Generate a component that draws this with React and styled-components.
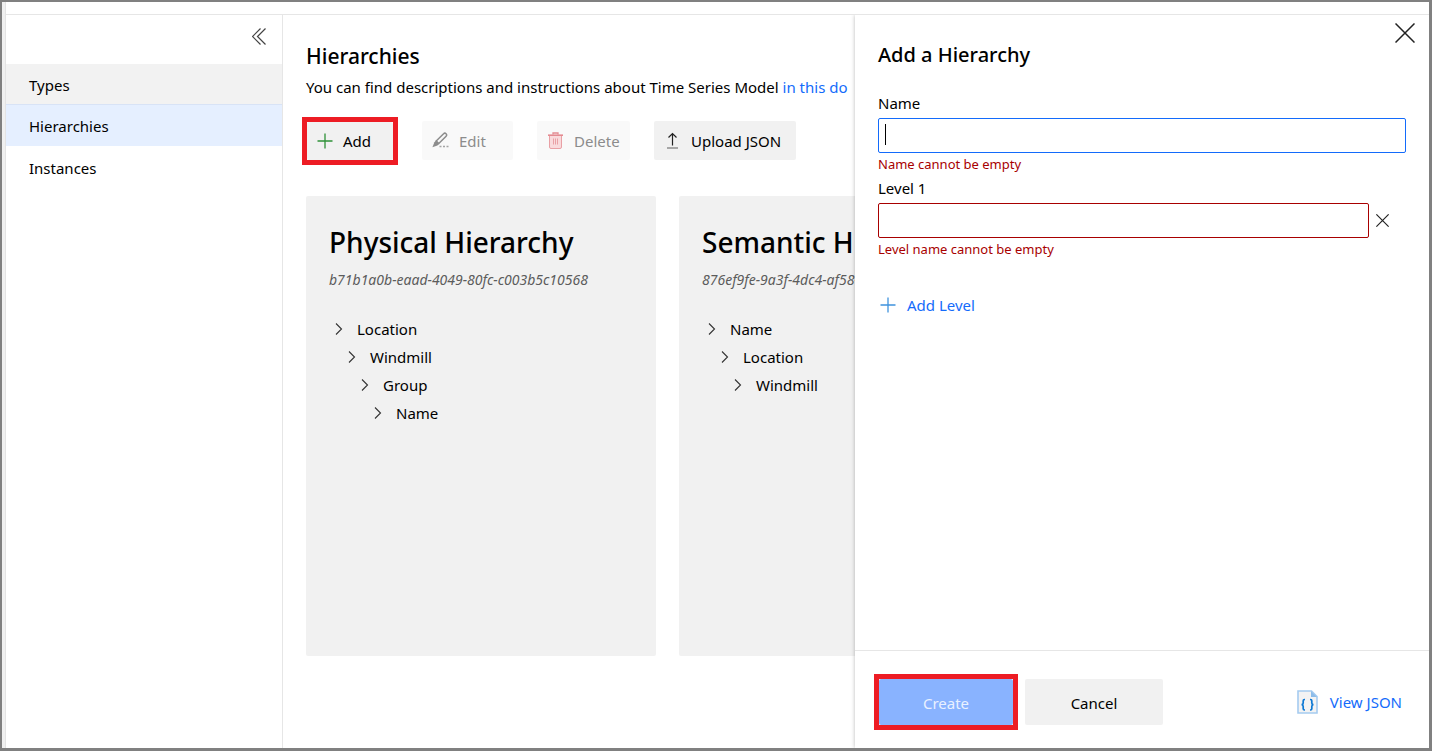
import React from "react";
import styled, { createGlobalStyle } from "styled-components";

const GlobalStyle = createGlobalStyle`
  *, *::before, *::after { box-sizing: border-box; }
  body {
    margin: 0;
    background: #fff;
    color: #000;
    font-family: "Noto Sans", "Open Sans", sans-serif;
    font-size: 15px;
    line-height: 20px;
  }
  h1, h2, h3, p, ul { margin: 0; padding: 0; }
  ul { list-style: none; }
  button, input { font: inherit; color: inherit; }
  a { color: #136bfb; text-decoration: none; }
`;

const Frame = styled.div`
  display: flex;
  flex-direction: column;
  min-height: 100vh;
  border: solid #808080;
  border-width: 2px 3px 3px 2px;
  overflow: hidden;
`;

const Shell = styled.div`
  display: flex;
  flex: 1;
  border-left: 3px solid #f0f0f0;
`;

const Page = styled.div`
  display: flex;
  flex-direction: column;
  flex: 1;
  min-width: 0;
  border-left: 1px solid #e3e3e3;
`;

const TopStrip = styled.div`
  height: 13px;
  border-bottom: 1px solid #e6e6e6;
`;

const Body = styled.div`
  display: flex;
  flex: 1;
`;

const Sidebar = styled.nav`
  flex: 0 0 277px;
  border-right: 1px solid #e6e6e6;
`;

const SidebarTop = styled.div`
  display: flex;
  justify-content: flex-end;
  height: 49px;
  padding: 12px 14px 0 0;
`;

const IconButton = styled.button`
  display: flex;
  flex: none;
  align-items: center;
  justify-content: center;
  width: ${(p) => p.$size}px;
  height: ${(p) => p.$size}px;
  padding: 0;
  border: 0;
  background: none;
  cursor: pointer;
`;

const NavLink = styled.a`
  display: flex;
  align-items: center;
  height: ${(p) => (p.$hover ? 40 : 42)}px;
  padding: ${(p) => (p.$active ? 0 : 2)}px 0 0 23px;
  border-top: ${(p) => (p.$active ? "1px solid #d8e3f6" : "0")};
  background: ${(p) => (p.$active ? "#e5efff" : p.$hover ? "#f2f2f2" : "none")};
  color: #000;
`;

const Main = styled.main`
  flex: 1;
  min-width: 0;
  padding: 29px 0 0 23px;
  overflow: hidden;
`;

const PageTitle = styled.h1`
  font-size: 21px;
  font-weight: 500;
  line-height: 24px;
`;

const Intro = styled.p`
  margin-top: 9px;
  white-space: nowrap;
`;

const Toolbar = styled.div`
  display: flex;
  align-items: center;
  gap: 24px;
  margin-top: 24px;
`;

const Highlight = styled.span`
  display: flex;
  flex: none;
  width: ${(p) => p.$width}px;
  margin: -4px 0 -5px -4px;
  border: 5px solid #ed1c24;
`;

const Button = styled.button`
  display: flex;
  flex: none;
  align-items: center;
  gap: 10px;
  width: ${(p) => p.$width}px;
  height: ${(p) => p.$height || 39}px;
  justify-content: ${(p) => (p.$center ? "center" : "flex-start")};
  padding: ${(p) => (p.$center ? "2px 0 0" : "0 0 0 10px")};
  border: 0;
  border-radius: 2px;
  background: ${(p) => (p.$primary ? "#89b3ff" : "#f1f1f1")};
  color: ${(p) => (p.$primary ? "#fff" : "#000")};
  cursor: pointer;

  &:disabled {
    background: ${(p) => (p.$primary ? "#89b3ff" : "#f9f9f9")};
    color: ${(p) => (p.$primary ? "#e9f1ff" : "#8c8c8c")};
    cursor: default;
  }
`;

const Cards = styled.div`
  display: flex;
  gap: 23px;
  margin-top: 36px;
`;

const Card = styled.article`
  flex: none;
  width: 350px;
  min-height: 460px;
  padding: 27px 23px;
  border-radius: 2px;
  background: #f1f1f1;
`;

const CardTitle = styled.h2`
  font-size: 28px;
  font-weight: 500;
  line-height: 38px;
  white-space: nowrap;
`;

const CardId = styled.p`
  margin-top: 9px;
  color: #5c5c5c;
  font-size: 14px;
  font-style: italic;
  white-space: nowrap;
`;

const Tree = styled.ul`
  margin-top: 25px;
`;

const TreeNode = styled.li`
  display: flex;
  align-items: center;
  gap: 13px;
  height: 28px;
  padding-left: ${(p) => 5 + p.$depth * 13}px;
`;

const Drawer = styled.aside`
  position: relative;
  display: flex;
  flex: 0 0 574px;
  flex-direction: column;
  background: #fff;
  box-shadow: 0 0 4px rgba(0, 0, 0, 0.28);
  clip-path: inset(0 0 0 -8px);
`;

const DrawerHeader = styled.header`
  display: flex;
  justify-content: space-between;
  padding: 6px 12px 0 23px;
`;

const DrawerTitle = styled.h2`
  padding-top: 22px;
  font-size: 20px;
  font-weight: 500;
  line-height: 24px;
`;

const DrawerBody = styled.div`
  flex: 1;
  padding: 26px 23px 0;
`;

const Field = styled.div`
  margin-bottom: 4px;
`;

const Label = styled.label`
  display: block;
  margin-bottom: 5px;
`;

const InputRow = styled.div`
  position: relative;
  display: flex;
  align-items: center;
  gap: 3px;
  padding-right: ${(p) => (p.$removable ? 14 : 0)}px;
`;

const Input = styled.input`
  flex: 1;
  min-width: 0;
  height: 35px;
  padding: 0 6px;
  border: 1px solid ${(p) => (p.$invalid ? "#a80000" : "#136bfb")};
  border-radius: 2px;
  outline: 0;
  background: #fff;
  caret-color: transparent;
`;

const Caret = styled.span`
  position: absolute;
  top: 6px;
  left: 7px;
  width: 1px;
  height: 21px;
  background: #000;
`;

const ErrorText = styled.p`
  padding-top: 1px;
  color: #a80000;
  font-size: 13px;
`;

const TextButton = styled.button`
  display: flex;
  align-items: center;
  gap: 11px;
  margin-top: 36px;
  padding: 0 0 0 2px;
  border: 0;
  background: none;
  color: #136bfb;
  cursor: pointer;
`;

const DrawerFooter = styled.footer`
  display: flex;
  align-items: center;
  gap: 7px;
  height: 98px;
  padding: 4px 27px 0 23px;
  border-top: 1px solid #e6e6e6;
`;

const JsonLink = styled.a`
  display: flex;
  align-items: center;
  gap: 12px;
  margin-left: auto;
`;

const Plus = ({ color }) => (
  <svg width="16" height="16" viewBox="0 0 16 16" fill="none" stroke={color} aria-hidden="true">
    <path d="M8 .5v15M.5 8h15" strokeWidth="1.3" />
  </svg>
);

const Cross = ({ size }) => (
  <svg width={size} height={size} viewBox="0 0 20 20" fill="none" stroke="#222" aria-hidden="true">
    <path d="M.5.5l19 19M19.5.5l-19 19" strokeWidth={size > 16 ? 1.5 : 1.8} />
  </svg>
);

const Collapse = () => (
  <svg width="14" height="17" viewBox="0 0 14 17" fill="none" stroke="#444" strokeWidth="1.2" aria-hidden="true">
    <path d="M8.5.5l-8 8 8 8M13.5.5l-8 8 8 8" />
  </svg>
);

const Chevron = () => (
  <svg width="10" height="12" viewBox="0 0 10 12" fill="none" stroke="#333" strokeWidth="1.1" aria-hidden="true">
    <path d="M2 .5L7.500 6 2 11.500" />
  </svg>
);

const Pencil = () => (
  <svg width="17" height="17" viewBox="0 0 17 17" fill="none" aria-hidden="true">
    <path d="M4.200 9L11.600 1.800a1.500 1.500 0 0 1 2.500 2.400L6.800 11.500z" stroke="#8d8d8d" strokeWidth="1.500" />
    <path d="M4 8.500l3.400 3.300-2 1.600-5 1.900 2-5z" fill="#8d8d8d" />
    <path d="M7.500 14.500h2M11 14.500h2M14.500 14.500h2" stroke="#a5a5a5" strokeWidth="1.600" />
  </svg>
);

const Bin = () => (
  <svg width="17" height="17" viewBox="0 0 17 17" fill="none" stroke="#e9a0a5" aria-hidden="true">
    <path d="M2.500 3.500h12v11.500a1.500 1.500 0 0 1-1.500 1.500H4A1.500 1.500 0 0 1 2.500 15z" fill="#f9dadc" />
    <path d="M1 3.200h15" stroke="#e48b91" strokeWidth="1.600" />
    <path d="M6 2.500V1h5v1.500" stroke="#e48b91" strokeWidth="1.300" />
    <path d="M6.500 6.500v6M8.500 6.500v6M10.500 6.500v6" />
  </svg>
);

const UploadArrow = () => (
  <svg width="17" height="17" viewBox="0 0 17 17" fill="none" aria-hidden="true">
    <path d="M8.500 13.500V1.500M4.500 5.500l4-4 4 4" stroke="#222" strokeWidth="1.200" />
    <path d="M3 16h11" stroke="#777" strokeWidth="1.200" />
  </svg>
);

const JsonFile = () => (
  <svg width="21" height="24" viewBox="0 0 21 24" fill="none" aria-hidden="true">
    <path d="M1 1h13.500L20 6.500V23H1z" fill="#f3f3f3" stroke="#a5cbf0" strokeWidth="1.600" />
    <path d="M14 1v6h6z" fill="#8dbdea" />
    <path
      d="M8 9.500H7.500q-1.300 0-1.300 1.300v2.200q0 1.500-1.600 1.700 1.600.2 1.600 1.700v2.300q0 1.300 1.300 1.300H8M13 9.500h.5q1.300 0 1.300 1.300v2.200q0 1.500 1.600 1.700-1.600.2-1.600 1.700v2.300q0 1.300-1.300 1.300H13"
      stroke="#0c78d4"
      strokeWidth="1.700"
    />
  </svg>
);

const hierarchies = [
  {
    name: "Physical Hierarchy",
    id: "b71b1a0b-eaad-4049-80fc-c003b5c10568",
    levels: ["Location", "Windmill", "Group", "Name"],
  },
  {
    name: "Semantic H",
    id: "876ef9fe-9a3f-4dc4-af58-",
    levels: ["Name", "Location", "Windmill"],
  },
];

export default function App() {
  return (
    <Frame>
      <GlobalStyle />
      <Shell>
        <Page>
          <TopStrip />
          <Body>
            <Sidebar>
              <SidebarTop>
                <IconButton $size={18} aria-label="Collapse menu">
                  <Collapse />
                </IconButton>
              </SidebarTop>
              <NavLink href="#types" $hover>Types</NavLink>
              <NavLink href="#hierarchies" $active aria-current="page">Hierarchies</NavLink>
              <NavLink href="#instances">Instances</NavLink>
            </Sidebar>
            <Main>
              <PageTitle>Hierarchies</PageTitle>
              <Intro>
                You can find descriptions and instructions about Time Series Model{" "}
                <a href="#docs">in this do</a>
              </Intro>
              <Toolbar>
                <Highlight $width={96}>
                  <Button $width={86} $height={38}><Plus color="#2f9138" />Add</Button>
                </Highlight>
                <Button $width={91} disabled><Pencil />Edit</Button>
                <Button $width={93} disabled><Bin />Delete</Button>
                <Button $width={142}><UploadArrow />Upload JSON</Button>
              </Toolbar>
              <Cards>
                {hierarchies.map((h) => (
                  <Card key={h.name}>
                    <CardTitle>{h.name}</CardTitle>
                    <CardId>{h.id}</CardId>
                    <Tree>
                      {h.levels.map((level, depth) => (
                        <TreeNode key={level} $depth={depth}>
                          <Chevron />
                          {level}
                        </TreeNode>
                      ))}
                    </Tree>
                  </Card>
                ))}
              </Cards>
            </Main>
            <Drawer aria-label="Add a Hierarchy">
              <DrawerHeader>
                <DrawerTitle>Add a Hierarchy</DrawerTitle>
                <IconButton $size={24} aria-label="Close">
                  <Cross size={20} />
                </IconButton>
              </DrawerHeader>
              <DrawerBody>
                <Field>
                  <Label htmlFor="name">Name</Label>
                  <InputRow>
                    <Input id="name" type="text" />
                    <Caret />
                  </InputRow>
                  <ErrorText>Name cannot be empty</ErrorText>
                </Field>
                <Field>
                  <Label htmlFor="level-1">Level 1</Label>
                  <InputRow $removable>
                    <Input id="level-1" type="text" $invalid />
                    <IconButton $size={20} aria-label="Remove level">
                      <Cross size={13} />
                    </IconButton>
                  </InputRow>
                  <ErrorText>Level name cannot be empty</ErrorText>
                </Field>
                <TextButton><Plus color="#3f93dd" />Add Level</TextButton>
              </DrawerBody>
              <DrawerFooter>
                <Highlight $width={144}>
                  <Button $width={134} $height={46} $center $primary disabled>Create</Button>
                </Highlight>
                <Button $width={138} $height={46} $center>Cancel</Button>
                <JsonLink href="#json"><JsonFile />View JSON</JsonLink>
              </DrawerFooter>
            </Drawer>
          </Body>
        </Page>
      </Shell>
    </Frame>
  );
}
